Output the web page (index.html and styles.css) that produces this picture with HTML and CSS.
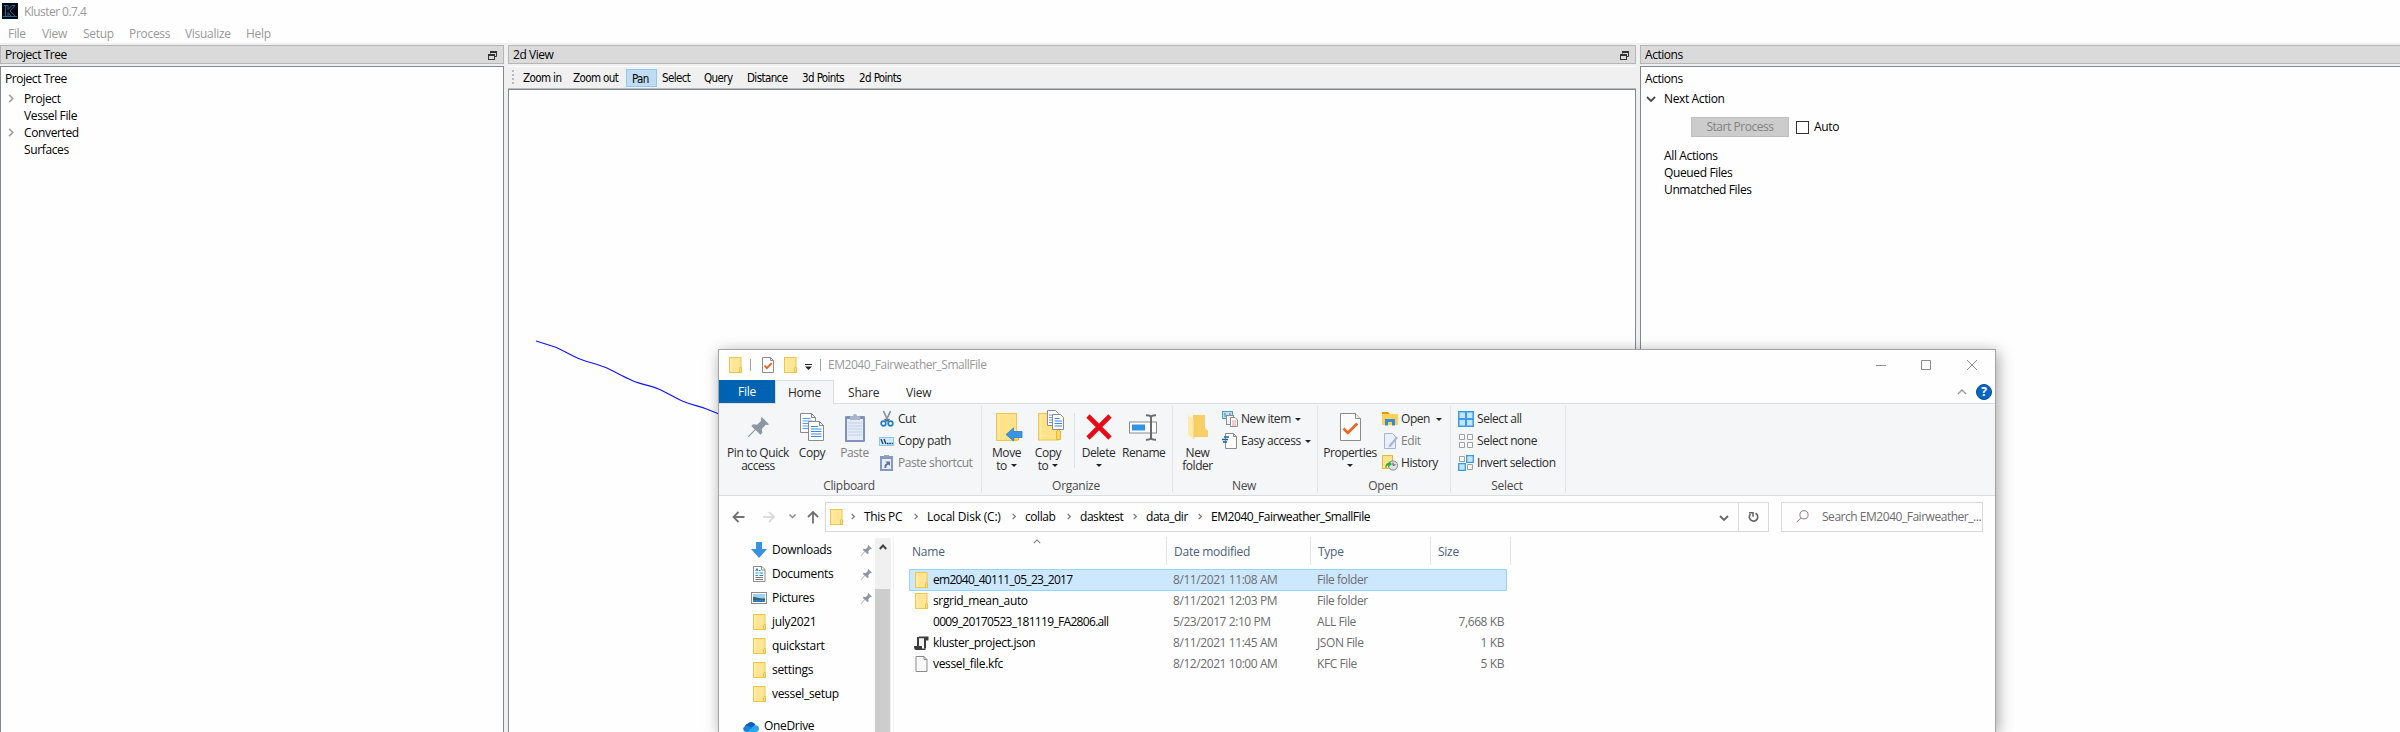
FILE: index.html
```html
<!DOCTYPE html>
<html lang="en">
<head>
<meta charset="utf-8">
<title>Kluster 0.7.4</title>
<link rel="stylesheet" href="styles.css">
</head>
<body>
<svg class="sprite" aria-hidden="true">
  <symbol id="folder" viewBox="0 0 13 16"><rect x=".5" y=".5" width="11.500" height="15" fill="#ffe694" stroke="#ebc650"/><path d="M2.200 1.500v13" stroke="#fff0b8"/><path d="M10.500 15.500v-4l1-1.500 1 1.500v4z" fill="#ffe07c" stroke="#e3b83c" stroke-width=".8"/></symbol>
  <symbol id="restore" viewBox="0 0 9 9"><path d="M2.500 2.500V1h6v4.500H7" fill="none" stroke="#333" stroke-width="1"/><path d="M2 1h7" stroke="#333" stroke-width="2"/><rect x=".5" y="4" width="6" height="4.500" fill="none" stroke="#333"/><path d="M0 4h7" stroke="#333" stroke-width="2"/></symbol>
  <symbol id="chev-r" viewBox="0 0 6 10"><path d="M1 1l4 4-4 4" fill="none" stroke="currentColor" stroke-width="1.800"/></symbol>
  <symbol id="chev-d" viewBox="0 0 10 6"><path d="M1 1l4 4 4-4" fill="none" stroke="currentColor" stroke-width="1.800"/></symbol>
  <symbol id="chev-u" viewBox="0 0 10 6"><path d="M1 5l4-4 4 4" fill="none" stroke="currentColor" stroke-width="1.300"/></symbol>
  <symbol id="chev-ub" viewBox="0 0 8 6"><path d="M.8 5L4 1.500 7.200 5" fill="none" stroke="currentColor" stroke-width="2"/></symbol>
  <symbol id="caret" viewBox="0 0 6 3"><path d="M0 0h6L3 3z" fill="#222"/></symbol>
  <symbol id="pin" viewBox="0 0 22 22"><path d="M14.500 0L22 7.500l-1.500 1-2-.5-4 4.500.5 4-2 2-5-5L1.200 20.800 0 21l.2-1.200L7 13 3.500 9.500l2-2 4 .5 4.300-4-.5-2z" fill="#8b98a3"/></symbol>
  <symbol id="page" viewBox="0 0 12 16"><path d="M.5.500h8l3 3v12H.5z" fill="#f9f9f9" stroke="#8c8c8c"/><path d="M8.500.500v3h3" fill="none" stroke="#8c8c8c"/></symbol>
  <symbol id="checkpage" viewBox="0 0 12 16"><path d="M.5.500h8l3 3v12H.5z" fill="#fdfdfd" stroke="#8c8c8c"/><path d="M8.500.500v3h3" fill="none" stroke="#8c8c8c"/><path d="M2.500 8.500l2.300 2.700 4.900-5" fill="none" stroke="#f05a1c" stroke-width="1.800"/></symbol>
</svg>

<div class="app">
  <header class="titlebar">
    <svg class="app-icon" viewBox="0 0 16 16"><rect width="16" height="16" fill="#05070d"/><path d="M2 2.500h4M3.500 2.500v10.500M6 2.500v4l4-4h3L8 8l5.500 5.500M6 13.500V9.500l3.500 4M1 13.500h14" fill="none" stroke="#1c6aa4"/></svg>
    <span>Kluster 0.7.4</span>
  </header>
  <nav class="menubar"><span class="m1">File</span><span class="m2">View</span><span class="m3">Setup</span><span class="m4">Process</span><span class="m5">Visualize</span><span class="m6">Help</span></nav>

  <main class="docks">
    <section class="dock">
      <h2 class="dock-title">Project Tree<svg class="restore"><use href="#restore"/></svg></h2>
      <div class="panel">
        <div class="tree-head">Project Tree</div>
        <ul class="tree">
          <li><svg class="tw"><use href="#chev-r"/></svg>Project</li>
          <li><i class="tw"></i>Vessel File</li>
          <li><svg class="tw"><use href="#chev-r"/></svg>Converted</li>
          <li><i class="tw"></i>Surfaces</li>
        </ul>
      </div>
    </section>

    <section class="dock view">
      <h2 class="dock-title">2d View<svg class="restore"><use href="#restore"/></svg></h2>
      <div class="toolbar">
        <i class="grip"></i>
        <span class="b1">Zoom in</span><span class="b2">Zoom out</span><span class="on">Pan</span><span class="b4">Select</span><span class="b5">Query</span><span class="b6">Distance</span><span class="b7">3d Points</span><span class="b8">2d Points</span>
      </div>
      <div class="canvas">
        <svg class="track" viewBox="0 0 260 140"><path d="M27 1L44.500 6.500C54 10 60 14.500 69 18.200S88 24 96 27.300 113 36 122.500 40.200 141 45.500 149.500 49 166 58 174.500 61.500 190 66 197.500 69L210 74 250 90" fill="none" stroke="#1414ff" stroke-width="1.200"/></svg>
      </div>
    </section>

    <section class="dock">
      <h2 class="dock-title open-end">Actions</h2>
      <div class="panel open-end">
        <div class="tree-head">Actions</div>
        <ul class="tree">
          <li><svg class="tw down"><use href="#chev-d"/></svg>Next Action</li>
        </ul>
        <div class="start-row"><button class="start" disabled>Start Process</button><i class="checkbox"></i><span>Auto</span></div>
        <ul class="tree">
          <li><i class="tw"></i>All Actions</li>
          <li><i class="tw"></i>Queued Files</li>
          <li><i class="tw"></i>Unmatched Files</li>
        </ul>
      </div>
    </section>
  </main>
</div>

<div class="explorer">
  <header class="ex-title">
    <svg class="fold"><use href="#folder"/></svg><i class="bar q1"></i>
    <svg class="qcheck"><use href="#checkpage"/></svg>
    <svg class="fold q2"><use href="#folder"/></svg>
    <svg class="qdrop" viewBox="0 0 7 6"><path d="M0 .5h7" stroke="#222"/><path d="M0 2.500h7L3.500 6z" fill="#222"/></svg><i class="bar q3"></i>
    <span>EM2040_Fairweather_SmallFile</span>
    <svg class="wincontrols" viewBox="0 0 102 12"><path d="M0 6.500h10M45.500 1.500h9v9h-9zM91 1l10 10M101 1L91 11" fill="none" stroke="#8c8c8c"/></svg>
  </header>
  <nav class="tabs">
    <span class="tab file">File</span><span class="tab home">Home</span><span class="tab share">Share</span><span class="tab">View</span>
    <svg class="collapse"><use href="#chev-u"/></svg><span class="help">?</span>
  </nav>

  <div class="ribbon">
    <section class="group g-clip">
      <div class="tools">
        <div class="big c-pin"><div class="ico"><svg width="21" height="21"><use href="#pin"/></svg></div>Pin to Quick<br>access</div>
        <div class="big c-copy"><div class="ico"><svg width="25" height="28" viewBox="0 0 25 28"><g stroke="#8a8a8a" fill="#fff"><path d="M.5.500h11l4 4v15H.5z"/><path d="M11.500.500v4h4" fill="none"/></g><path d="M2.500 5.500h8M2.500 8h10M2.500 10.500h10M2.500 13h6M2.500 15.500h6" stroke="#5b9bea"/><g stroke="#8a8a8a" fill="#fff"><path d="M8.500 8.500h11l4 4v15h-15z"/><path d="M19.500 8.500v4h4" fill="none"/></g><path d="M11 13.500h7M11 16h10.500M11 18.500h10.500M11 21h10.500M11 23.500h10.500" stroke="#3f87e6"/></svg></div>Copy</div>
        <div class="big c-paste dim"><div class="ico"><svg width="20" height="29" viewBox="0 0 20 29"><rect x="0" y="3" width="20" height="26" rx="1" fill="#7f93bb"/><rect x="2" y="6" width="16" height="21" fill="#e6ecf7"/><path d="M3 10h14M3 13h14M3 16h14M3 19h14M3 22h14" stroke="#c3cfe4"/><path d="M5 3h3a2 2 0 0 1 4 0h3v4H5z" fill="#a9b4c8"/></svg></div>Paste</div>
        <div class="smalls">
          <div class="sm"><svg viewBox="0 0 16 16"><path d="M4.500 0L9 10M11.500 0L7 10" stroke="#87939e" stroke-width="1.700"/><path d="M5.500 8L8 10l2.500-2" stroke="#56636f" stroke-width="1.500" fill="none"/><circle cx="4.500" cy="12.500" r="2.300" fill="none" stroke="#1d7fc4" stroke-width="1.700"/><circle cx="11.500" cy="12.500" r="2.300" fill="none" stroke="#1d7fc4" stroke-width="1.700"/></svg>Cut</div>
          <div class="sm"><svg viewBox="0 0 16 16"><rect x=".5" y="4.500" width="14" height="8" fill="#cfeafc" stroke="#8cc8ee"/><path d="M2 6l2 5M5 6l2 5" stroke="#16324a" stroke-width="1.200"/><path d="M8 10.500h1.500M10.300 10.500h1.500M12.600 10.500h1.200" stroke="#16324a" stroke-width="1.400"/></svg>Copy path</div>
          <div class="sm dim"><svg viewBox="0 0 16 16"><rect x="1" y="1" width="13" height="15" fill="#8598bf"/><rect x="3" y="4" width="9" height="10" fill="#e8edf7"/><path d="M5 2V0h5v2z" fill="#9aa6bd"/><path d="M5.500 13c-.3-3 .8-4.300 2.500-4.800L6.500 6.500H11V11L9.500 9.500C8 10 7.200 11 7.200 13z" fill="#5f7199"/></svg>Paste shortcut</div>
        </div>
      </div>
      <div class="caption">Clipboard</div>
    </section>

    <section class="group g-org">
      <div class="tools">
        <div class="big c-move"><div class="ico"><svg class="shift" width="27" height="29" viewBox="0 0 27 29"><rect x=".5" y=".5" width="20" height="27" fill="#ffe38b" stroke="#ebc650"/><path d="M3 1.500v25" stroke="#fff0b8"/><path d="M18.500 27v-7l2-2 2 2v7z" fill="#ffd75e" stroke="#e3b83c"/><path d="M10 21.500l7.500-6.500v3.500h8.500v6h-8.500V28z" fill="#3a96e4" stroke="#2b7cc6" stroke-width=".8"/></svg></div>Move<br>to<svg class="car"><use href="#caret"/></svg></div>
        <div class="big c-copyto"><div class="ico"><svg class="shift2" width="27" height="31" viewBox="0 0 27 31"><rect x=".5" y="3.500" width="20" height="26.500" fill="#ffe38b" stroke="#ebc650"/><path d="M3 4.500v25" stroke="#fff0b8"/><path d="M18.500 29.500v-8l2-2 2 2v8z" fill="#ffd75e" stroke="#e3b83c"/><path d="M9.500.500h8l3 3v12h-11z" fill="#fff" stroke="#8a8a8a"/><path d="M11 5h5M11 7.500h5M11 10h5M11 12.500h5" stroke="#5b9bea"/><path d="M14.500 4.500h8l3 3v12h-11z" fill="#fff" stroke="#8a8a8a"/><path d="M16.500 8.500h5M16.500 11h7.500M16.500 13.500h7.500M16.500 16h7.500" stroke="#3f87e6"/></svg></div>Copy<br>to<svg class="car"><use href="#caret"/></svg></div>
        <i class="tsep"></i>
        <div class="big c-del"><div class="ico"><svg width="26" height="26" viewBox="0 0 26 26"><path d="M2 2l22 22M24 2L2 24" stroke="#e60b17" stroke-width="4.600"/></svg></div>Delete<br><svg class="car solo"><use href="#caret"/></svg></div>
        <div class="big c-ren"><div class="ico"><svg width="28" height="27" viewBox="0 0 28 27"><rect x=".5" y="8" width="27" height="11" fill="#fff" stroke="#8a8a8a"/><rect x="3" y="10.500" width="13" height="6" fill="#3593e4"/><path d="M22 2.500v22M17 1.200c3 0 5 .4 5 2.300 0-1.900 2-2.300 5-2.300M17 25.800c3 0 5-.4 5-2.300 0 1.900 2 2.300 5 2.300" fill="none" stroke="#6b6b6b" stroke-width="2"/></svg></div>Rename</div>
      </div>
      <div class="caption">Organize</div>
    </section>

    <section class="group g-new">
      <div class="tools">
        <div class="big c-nf"><div class="ico"><svg width="20" height="28" viewBox="0 0 20 28"><path d="M5 2h12v13l3 3v6H5z" fill="#f7cf66"/><path d="M0 2l6 4v20l-6-4z" fill="#ffe9a6"/><path d="M6 6v20" stroke="#f0c14e" stroke-width=".6"/></svg></div>New<br>folder</div>
        <div class="smalls">
          <div class="sm"><svg viewBox="0 0 16 16"><rect x=".5" y=".5" width="10" height="7" fill="#bfe0ee" stroke="#4f9dbd"/><path d="M3 2v4M8 2v4" stroke="#4383a0"/><rect x="4.500" y="4.500" width="7" height="9" fill="#f3f3f3" stroke="#8c8c8c"/><path d="M8.500 6.500h4.500l2.500 2.500v6.500h-7z" fill="#fff" stroke="#8c8c8c"/><path d="M10 10h4M10 12h4M10 14h4" stroke="#e6969b"/></svg>New item<svg class="car"><use href="#caret"/></svg></div>
          <div class="sm"><svg viewBox="0 0 16 16"><path d="M3.500.500h8l3 3v12h-11z" fill="#fff" stroke="#8c8c8c"/><path d="M11.500.500v3h3" fill="none" stroke="#8c8c8c"/><path d="M2 4h5M0 6.500h6M1 9h4" stroke="#1b62ad" stroke-width="1.300"/></svg>Easy access<svg class="car"><use href="#caret"/></svg></div>
        </div>
      </div>
      <div class="caption">New</div>
    </section>

    <section class="group g-open">
      <div class="tools">
        <div class="big c-prop"><div class="ico"><svg width="21" height="28" viewBox="0 0 21 28"><path d="M.5.500h15l5 5v22H.5z" fill="#fcfcfc" stroke="#8c8c8c"/><path d="M15.500.500v5h5" fill="#eee" stroke="#8c8c8c"/><path d="M3.500 15.500l4.300 4.500 9.500-9.500" fill="none" stroke="#f4601e" stroke-width="2.600"/></svg></div>Properties<br><svg class="car solo"><use href="#caret"/></svg></div>
        <div class="smalls">
          <div class="sm"><svg viewBox="0 0 16 16"><path d="M0 1h6l2 2H0z" fill="#dd9b08"/><path d="M0 3h16v11H0z" fill="#ffd056"/><path d="M3 8h10v6.500h-3V11H6v3.500H3z" fill="#2f8fd8"/></svg>Open<svg class="car wide"><use href="#caret"/></svg></div>
          <div class="sm dim"><svg viewBox="0 0 16 16"><path d="M2.500.500h8l3 3v12h-11z" fill="#eaf0fa" stroke="#a4b4d2"/><path d="M14.500 3.500l1.500 1.300-7 8.700-2.500 1 .5-2.500z" fill="#a9b8d6"/></svg>Edit</div>
          <div class="sm"><svg viewBox="0 0 16 16"><path d="M.5.500h10v13H.5z" fill="#ffe68c" stroke="#e3b83c"/><circle cx="11" cy="10.500" r="4.600" fill="#dfe2e4" stroke="#84888c"/><path d="M11 7.500v3l2.500-1" stroke="#555" fill="none"/><path d="M3.500 13c-.5-3 .8-5 3.200-5.200V6L10 9l-3.300 3v-1.700C5 10.300 4.500 11 4.500 13z" fill="#27b03a"/></svg>History</div>
        </div>
      </div>
      <div class="caption">Open</div>
    </section>

    <section class="group g-sel">
      <div class="tools">
        <div class="smalls">
          <div class="sm"><svg viewBox="0 0 16 16"><rect width="16" height="16" fill="#3a9be8"/><path d="M1.500 1.500h5.500v5.500H1.500zM9 1.500h5.500v5.500H9zM1.500 9h5.500v5.500H1.500zM9 9h5.500v5.500H9z" fill="#c4e5fc"/></svg>Select all</div>
          <div class="sm"><svg viewBox="0 0 16 16"><path d="M1.500 1.500h5v5h-5zM9.500 1.500h5v5h-5zM1.500 9.500h5v5h-5zM9.500 9.500h5v5h-5z" fill="#fff" stroke="#a0a0a0"/></svg>Select none</div>
          <div class="sm"><svg viewBox="0 0 16 16"><path d="M1.500 1.500h5v5h-5zM9.500 9.500h5v5h-5z" fill="#fff" stroke="#a0a0a0"/><path d="M8.700.700h6.600v6.600H8.700zM.7 8.700h6.600v6.600H.7z" fill="#c4e5fc" stroke="#3a9be8" stroke-width="1.300"/></svg>Invert selection</div>
        </div>
      </div>
      <div class="caption">Select</div>
    </section>
  </div>

  <div class="addr">
    <svg class="nav" width="87" height="14" viewBox="0 0 87 14"><path d="M12.500 7H2M6.500 2L1.500 7l5 5" fill="none" stroke="#717171" stroke-width="1.800"/><path d="M31 7h10.500M37 2l5 5-5 5" fill="none" stroke="#d5d5d5" stroke-width="1.600"/><path d="M57.500 4.500l3 3 3-3" fill="none" stroke="#8a8a8a" stroke-width="1.500"/><path d="M81 13.500V2M76 7l5-5 5 5" fill="none" stroke="#717171" stroke-width="1.800"/></svg>
    <div class="path">
      <svg class="fold"><use href="#folder"/></svg>
      <svg class="sep"><use href="#chev-r"/></svg><span class="p1">This PC</span>
      <svg class="sep"><use href="#chev-r"/></svg><span class="p2">Local Disk (C:)</span>
      <svg class="sep"><use href="#chev-r"/></svg><span class="p3">collab</span>
      <svg class="sep"><use href="#chev-r"/></svg><span class="p4">dasktest</span>
      <svg class="sep"><use href="#chev-r"/></svg><span class="p5">data_dir</span>
      <svg class="sep"><use href="#chev-r"/></svg><span class="p6">EM2040_Fairweather_SmallFile</span>
      <svg class="pdrop"><use href="#chev-d"/></svg>
      <div class="refresh"><svg width="11" height="12" viewBox="0 0 11 12"><path d="M7.500 2.200A4.200 4.200 0 1 1 2.500 3" fill="none" stroke="#666" stroke-width="1.700"/><path d="M1 1.800h4v4" fill="none" stroke="#666" stroke-width="1.600"/></svg></div>
    </div>
    <div class="search"><svg width="13" height="13" viewBox="0 0 13 13"><circle cx="8" cy="4.800" r="4.100" fill="none" stroke="#8a7f7f"/><path d="M5 7.800L.5 12.300" stroke="#8a7f7f"/></svg><span>Search EM2040_Fairweather_...</span></div>
  </div>

  <div class="body">
    <aside class="side">
      <div class="side-items">
        <div class="it"><svg viewBox="0 0 16 16"><path d="M5 0h6v7h5l-8 9-8-9h5z" fill="#3793e0"/></svg>Downloads<svg class="pin"><use href="#pin"/></svg></div>
        <div class="it"><svg viewBox="0 0 16 16"><path d="M2.500.500h8.500l3 3v12H2.500z" fill="#fff" stroke="#8c8c8c"/><path d="M10.500.500v3.500H14" fill="none" stroke="#8c8c8c"/><path d="M4.500 5l1.500-2 1 2M8 4.500h1.500M4.500 7h3M8.500 7H12M4.500 9.500H7M8.500 9.500H12" stroke="#2b86c8" stroke-width="1.200" fill="none"/><path d="M4.500 11.500H12M4.500 13.500H12" stroke="#777"/></svg>Documents<svg class="pin"><use href="#pin"/></svg></div>
        <div class="it"><svg viewBox="0 0 16 16"><rect x=".5" y="2.500" width="15" height="11" fill="#fff" stroke="#8c8c8c"/><rect x="2" y="4" width="12" height="8" fill="#9fd0f5"/><path d="M2 7c3-.5 5 1.500 12 1.500V12H2z" fill="#2c6b78"/><path d="M2 10h12v2H2z" fill="#3978b9"/></svg>Pictures<svg class="pin"><use href="#pin"/></svg></div>
        <div class="it"><svg class="f"><use href="#folder"/></svg>july2021</div>
        <div class="it"><svg class="f"><use href="#folder"/></svg>quickstart</div>
        <div class="it"><svg class="f"><use href="#folder"/></svg>settings</div>
        <div class="it"><svg class="f"><use href="#folder"/></svg>vessel_setup</div>
        <div class="it one"><svg viewBox="0 0 16 16"><path d="M2 8a4 4 0 0 1 3-2.500A4.500 4.500 0 0 1 12.500 7L8 11z" fill="#0a5cb5"/><path d="M1.500 8.500A3 3 0 0 1 5 8l7 3-3 3H3A3 3 0 0 1 1.500 8.500z" fill="#1484d8"/><path d="M4 14l7-6.500a3.500 3.500 0 0 1 5 3.300c0 2-1.500 3.200-3 3.200z" fill="#2aa5ec"/></svg>OneDrive</div>
      </div>
      <div class="scroll"><svg><use href="#chev-ub"/></svg><i></i></div>
    </aside>
    <div class="list">
      <div class="row head"><span>Name<svg class="sort"><use href="#chev-u"/></svg></span><span>Date modified</span><span>Type</span><span class="hs">Size</span></div>
      <div class="row sel"><span class="snug"><svg class="f"><use href="#folder"/></svg>em2040_40111_05_23_2017</span><span>8/11/2021 11:08 AM</span><span>File folder</span><span></span></div>
      <div class="row"><span><svg class="f"><use href="#folder"/></svg>srgrid_mean_auto</span><span>8/11/2021 12:03 PM</span><span>File folder</span><span></span></div>
      <div class="row"><span class="tight"><svg class="f"></svg>0009_20170523_181119_FA2806.all</span><span>5/23/2017 2:10 PM</span><span>ALL File</span><span>7,668 KB</span></div>
      <div class="row"><span><svg class="js" viewBox="0 0 15 14"><path d="M5 1.500h8.500v2H11v9" fill="none" stroke="#3c3c3c" stroke-width="2"/><path d="M4 1v10" stroke="#3c3c3c" stroke-width="2"/><path d="M5 2.500h5V10H5z" fill="#f3f3f3"/><path d="M0 10h8v2.500h3.500V14H2C.8 14 0 12.500 0 10z" fill="#3c3c3c"/></svg>kluster_project.json</span><span>8/11/2021 11:45 AM</span><span>JSON File</span><span>1 KB</span></div>
      <div class="row"><span><svg class="f"><use href="#page"/></svg>vessel_file.kfc</span><span>8/12/2021 10:00 AM</span><span>KFC File</span><span>5 KB</span></div>
    </div>
  </div>
</div>
</body>
</html>
```
FILE: styles.css
```css
* { box-sizing: border-box; }
body {
  margin: 0; width: 2400px; height: 732px; overflow: hidden; position: relative;
  font: 12px/16px "Open Sans", "Noto Sans", sans-serif; letter-spacing: -0.5px;
  color: #000; background: #fefefe;
}
ul, h2 { margin: 0; padding: 0; list-style: none; font: inherit; }
svg { display: block; flex: none; overflow: visible; }
span { white-space: nowrap; }
.sprite { position: absolute; width: 0; height: 0; }

/* Kluster main window */
.app { display: flex; flex-direction: column; height: 732px; }
.titlebar { height: 24px; display: flex; align-items: center; gap: 6px; padding: 0 0 2px 2px; color: #999; letter-spacing: -0.55px; }
.titlebar span { padding-top: 2px; }
.app-icon { width: 16px; height: 16px; }
.menubar { height: 19px; display: flex; align-items: center; padding: 1px 0 0 8px; color: #999; letter-spacing: -0.3px; }
.m1 { width: 34px; } .m2 { width: 41px; } .m3 { width: 46px; } .m4 { width: 56px; } .m5 { width: 61px; }
.docks { flex: 1; min-height: 0; display: grid; grid-template-columns: 504px 1128px 1fr; gap: 4px; padding-top: 2px; background: #f0f0f0; }
.dock { display: flex; flex-direction: column; min-width: 0; min-height: 0; }
.dock-title { height: 19px; border: 1px solid #b6b6b6; background: #dadada; display: flex; align-items: center; justify-content: space-between; padding: 1px 6px 0 4px; margin-bottom: 2px; letter-spacing: -0.45px; }
.restore { width: 9px; height: 9px; }
.panel { flex: 1; border: 1px solid #828790; border-bottom: 0; background: #fefefe; }
.open-end { border-right: 0; }
.tree-head { height: 23px; line-height: 24px; padding-left: 4px; letter-spacing: -0.45px; }
.tree { letter-spacing: -0.37px; }
.tree li { height: 17px; line-height: 17px; display: flex; align-items: center; }
.tw { width: 6px; height: 9px; margin: 0 10px 0 7px; color: #a0a0a0; }
.tw.down { width: 10px; height: 6px; margin: 0 8px 0 5px; color: #4a4a4a; }
.start-row { height: 40px; display: flex; align-items: center; padding-left: 50px; letter-spacing: -0.3px; }
.start { width: 98px; height: 20px; padding: 0; border: 1px solid #bfbfbf; background: #ccc; color: #838383; font: inherit; letter-spacing: -0.45px; }
.checkbox { width: 13px; height: 13px; border: 1px solid #333; background: #fff; margin: 0 5px 0 7px; }

.toolbar { height: 23px; border-top: 1px solid #fff; border-bottom: 1px solid #b8b8b8; display: flex; align-items: center; font: 11.5px/16px "DejaVu Sans Condensed", "DejaVu Sans", sans-serif; letter-spacing: -0.6px; }
.grip { width: 2px; height: 15px; margin: 0 9px 0 4px; background: repeating-linear-gradient(#b9b9b9 0 2px, transparent 2px 4px); }
.b1 { width: 50px; } .b2 { width: 53px; }
.on { width: 31px; height: 18px; line-height: 18px; padding-left: 5px; margin-right: 5px; border: 1px solid #90c8f6; background: #c0dcf3; }
.b4 { width: 42px; } .b5 { width: 43px; } .b6 { width: 55px; } .b7 { width: 57px; }
.canvas { flex: 1; border: 1px solid #828790; border-bottom: 0; background: #fefefe; padding-top: 250px; }
.track { width: 260px; height: 140px; }

/* Explorer window floating above */
.explorer {
  position: absolute; left: 718px; top: 349px; width: 1278px; height: 383px;
  border: 1px solid #a3a3a3; border-bottom: 0; background: #fefefe; box-shadow: 2px 3px 14px rgba(0, 0, 0, .36);
}
.fold { width: 13px; height: 16px; }
.ex-title { height: 30px; display: flex; align-items: center; padding-left: 10px; color: #999; letter-spacing: -0.47px; }
.bar { width: 1px; height: 12px; background: #a0a0a0; }
.q1 { margin: 0 11px 0 8px; }
.qcheck { width: 12px; height: 16px; }
.q2 { margin-left: 10px; }
.qdrop { width: 7px; height: 6px; margin: 4px 8px 0 8px; }
.q3 { margin-right: 7px; }
.wincontrols { width: 102px; height: 12px; margin: 0 17px 1px auto; }
.tabs { height: 24px; display: flex; align-items: center; border-bottom: 1px solid #dcdddf; letter-spacing: -0.2px; color: #2a2a2a; }
.tab { height: 24px; line-height: 25px; }
.file { width: 56px; text-align: center; background: #0063b1; color: #fff; height: 23px; line-height: 24px; align-self: flex-start; }
.home { width: 59px; text-align: center; background: #f4f6f8; border: 1px solid #dcdddf; border-bottom: 0; line-height: 23px; margin-right: 14px; }
.share { width: 58px; }
.collapse { width: 10px; height: 6px; margin-left: auto; margin-right: 9px; color: #999; }
.help { width: 16px; height: 16px; margin-right: 3px; border-radius: 50%; background: #0767c6; border: 1px solid #0a4b8e; color: #fff; text-align: center; font-weight: 700; font-size: 12px; line-height: 14px; }

.ribbon { height: 92px; display: flex; background: #f4f6f8; border-bottom: 1px solid #dcdddf; padding: 2px 0 4px; color: #2b2b2b; letter-spacing: -0.44px; }
.group { border-right: 1px solid #e1e3e5; height: 86px; display: flex; flex-direction: column; }
.g-clip { width: 263px; } .g-org { width: 191px; } .g-new { width: 145px; } .g-open { width: 133px; } .g-sel { width: 115px; }
.tools { display: flex; flex: none; height: 72px; }
.caption { height: 14px; text-align: center; line-height: 16px; padding-right: 2px; color: #4a4a4a; letter-spacing: -0.3px; }
.big { padding-top: 7px; line-height: 13px; text-align: center; white-space: nowrap; }
.ico { height: 28px; margin-bottom: 5px; display: flex; align-items: center; justify-content: center; }
.c-pin { width: 78px; } .c-copy { width: 30px; } .c-paste { width: 47px; margin: 0 1px 0 4px; }
.c-move { width: 49px; } .c-copyto { width: 34px; } .c-del { width: 47px; } .c-ren { width: 40px; }
.c-ren .ico { padding-left: 2px; }
.shift { margin-left: 5px; } .shift2 { margin: -4px 0 0 6px; }
.c-nf { width: 49px; } .c-prop { width: 64px; }
.tsep { width: 1px; height: 55px; background: #dfe1e3; margin: 7px 0 0 9px; }
.car { display: inline-block; width: 6px; height: 3px; margin-left: 4px; vertical-align: 3px; }
.car.solo { margin: 0; }
.car.wide { margin-left: 6px; }
.smalls { padding-top: 2px; }
.g-sel .smalls { padding-left: 7px; }
.sm { height: 22px; display: flex; align-items: center; white-space: nowrap; }
.sm > svg:first-child { width: 16px; height: 16px; margin-right: 3px; }
.dim { color: #808080; }

.addr { height: 41px; display: flex; align-items: center; padding-left: 13px; letter-spacing: -0.45px; }
.path { width: 944px; height: 30px; margin-left: 6px; padding-left: 4px; border: 1px solid #d9d9d9; display: flex; align-items: center; }
.sep { width: 4px; height: 7px; margin: 0 9px 0 8px; color: #777; }
.p1 { width: 42px; letter-spacing: -0.35px; } .p2 { width: 77px; letter-spacing: -0.2px; } .p3 { width: 34px; } .p4 { width: 45px; } .p5 { width: 44px; }
.pdrop { width: 10px; height: 6px; margin: 2px 9px 0 auto; color: #666; }
.refresh { width: 30px; height: 28px; border-left: 1px solid #d9d9d9; display: flex; align-items: center; justify-content: center; }
.search { width: 202px; height: 30px; margin-left: 12px; border: 1px solid #d9d9d9; padding-left: 14px; display: flex; align-items: center; gap: 13px; color: #6d6d6d; letter-spacing: -0.47px; }

.body { display: flex; height: 195px; overflow: hidden; }
.side { width: 175px; display: flex; border-right: 1px solid #f2f2f2; padding-top: 1px; }
.side-items { width: 156px; letter-spacing: -0.32px; }
.it { height: 24px; display: flex; align-items: center; padding-left: 32px; }
.it > svg:first-child { width: 16px; height: 16px; margin-right: 5px; }
.it > svg.f:first-child { width: 13px; margin: 0 6px 0 2px; }
.pin { width: 11px; height: 11px; margin: 0 3px 0 auto; }
.it.one { padding: 4px 0 0 24px; margin-top: 8px; height: 26px; align-items: flex-start; }
.scroll { width: 16px; background: #f0f0f0; display: flex; flex-direction: column; }
.scroll svg { width: 8px; height: 6px; margin: 6px 4px 39px; color: #444; }
.scroll i { flex: 1; background: #cdcdcd; margin-right: 1px; }
.list { padding-left: 15px; color: #6d6d6d; }
.row { display: grid; grid-template-columns: 263px 144px 120px 67px; width: 598px; height: 22px; margin-bottom: -1px; border: 1px solid transparent; align-items: center; letter-spacing: -0.42px; }
.row span { display: flex; align-items: center; }
.row span:first-child { color: #000; padding-left: 5px; letter-spacing: -0.35px; }
.row span:last-child { justify-content: flex-end; }
.row .f { width: 13px; height: 16px; margin-right: 5px; }
.row .js { width: 15px; height: 14px; margin: 0 4px 0 -1px; }
.row .tight:first-child { letter-spacing: -0.68px; }
.row .snug:first-child { letter-spacing: -0.7px; }
.row.sel { background: #cce8ff; border-color: #99d1ff; }
.row.head { height: 25px; width: 602px; margin-bottom: 7px; border: 0; grid-template-columns: 258px 144px 120px 80px; color: #4c607a; letter-spacing: -0.25px; align-items: stretch; }
.row.head span { border-right: 1px solid #e5e5e5; padding-left: 7px; padding-top: 2px; }
.row.head span:first-child { color: #4c607a; padding-left: 3px; letter-spacing: -0.2px; }
.row.head .hs { justify-content: flex-start; }
.sort { width: 8px; height: 5px; margin: 0 0 21px 88px; color: #777; }
```
